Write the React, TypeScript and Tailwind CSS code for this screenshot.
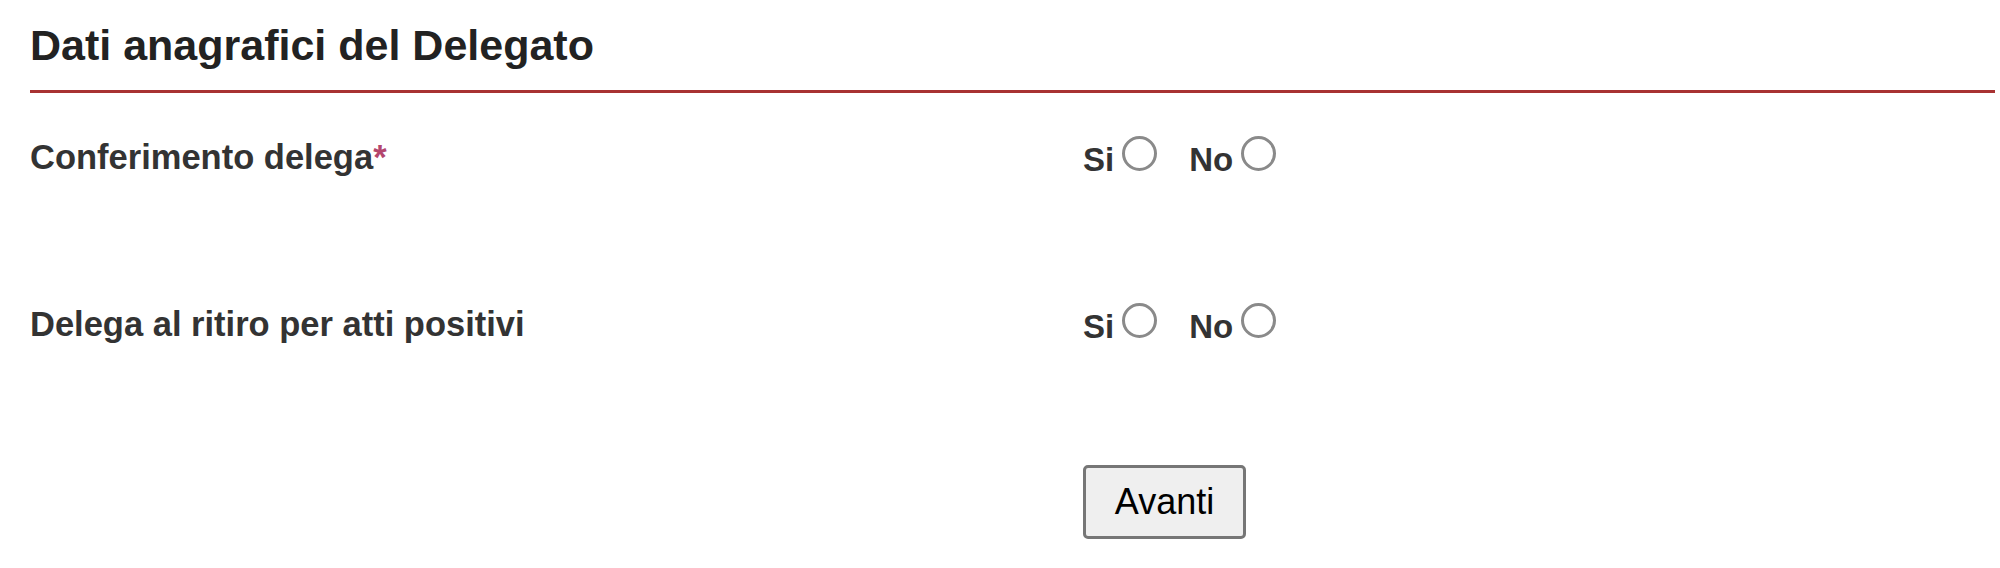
import React, { type FC } from "react";

const font = { fontFamily: '"Liberation Sans", Arial, sans-serif' };

const Radio: FC<{ label: string }> = ({ label }) => (
  <label className="flex items-start">
    <span className="mt-[3px] text-[33px] leading-[40px] font-bold text-[#333]">{label}</span>
    <span className="ml-[8px] -mt-[1px] box-border block h-[35px] w-[35px] rounded-full border-[3px] border-[#8a8a8a] bg-white" />
  </label>
);

const Row: FC<{ label: string; required?: boolean }> = ({ label, required }) => (
  <div className="grid grid-cols-[1053px_1fr] items-start">
    <div className="text-[34.5px] leading-[40px] font-bold text-[#333]">
      {label}
      {required && <span className="text-[#b4466e]">*</span>}
    </div>
    <div className="flex items-start gap-[32px]">
      <Radio label="Si" />
      <Radio label="No" />
    </div>
  </div>
);

const App: FC = () => (
  <div className="min-h-[568px] bg-white pl-[30px] pr-[5px]" style={font}>
    <h2 className="border-b-[3px] border-[#a83232] pt-[21px] pb-[21px] text-[43px] leading-[48px] font-bold text-[#222]">
      Dati anagrafici del Delegato
    </h2>
    <div className="mt-[44px] flex flex-col gap-[124px]">
      <Row label="Conferimento delega" required />
      <Row label="Delega al ritiro per atti positivi" />
    </div>
    <div className="mt-[118px] grid grid-cols-[1053px_1fr]">
      <div />
      <div>
        <button className="flex h-[74px] w-[163px] items-center justify-center rounded-[5px] border-[3px] border-[#767676] bg-[#efefef] text-[36px] text-black">
          Avanti
        </button>
      </div>
    </div>
  </div>
);

export default App;
